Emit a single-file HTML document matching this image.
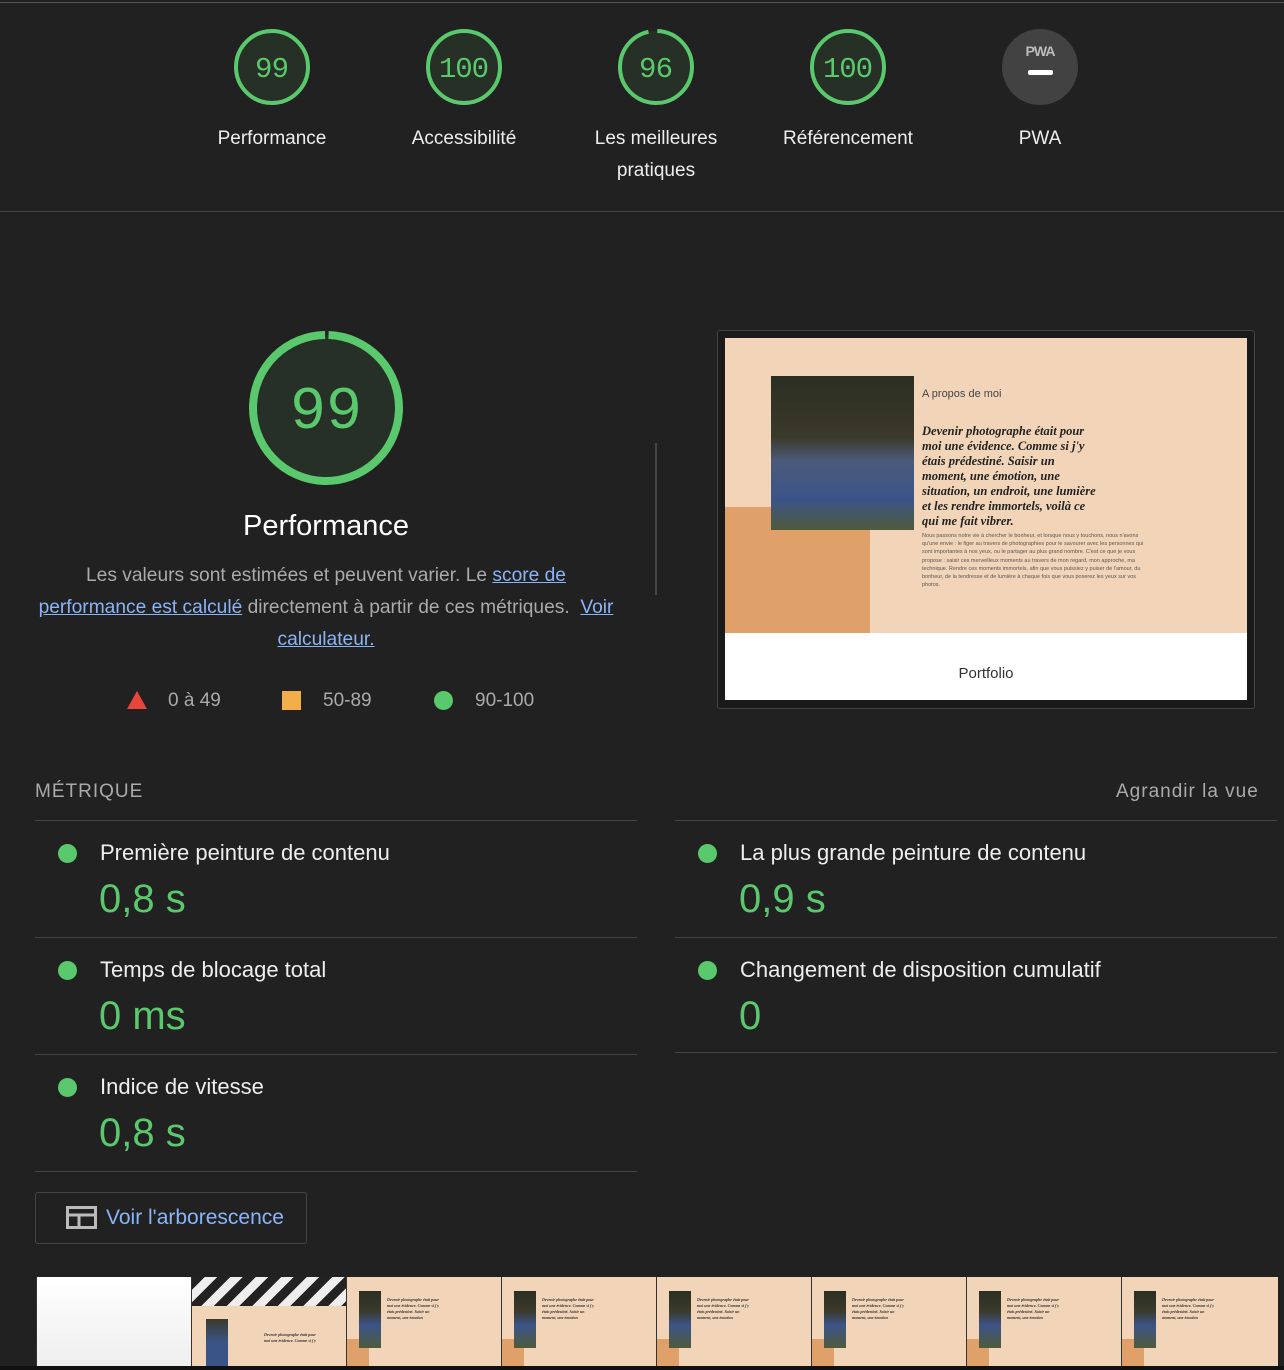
<!DOCTYPE html>
<html><head><meta charset="utf-8"><style>
*{margin:0;padding:0;box-sizing:border-box}
body{width:1284px;height:1370px;background:#212121;font-family:"Liberation Sans",sans-serif;color:#fff;position:relative;overflow:hidden}
.a{position:absolute}
.lbl{position:absolute;width:190px;text-align:center;font-size:19px;line-height:32px;color:#eee}
.hr{position:absolute;height:1px;background:#444}
.dot{position:absolute;width:19px;height:19px;border-radius:50%;background:#5ac86c}
.mt{position:absolute;font-size:22px;color:#eee}
.mv{position:absolute;font-size:40px;color:#5ac86c}
.fr{position:absolute;top:1277px;width:155px;height:89px;background:#f2d5b8;overflow:hidden;border-left:1px solid #333}
.fr .o{position:absolute;left:0;top:62px;width:22px;height:27px;background:#e0a06a}
.fr .p{position:absolute;left:12px;top:14px;width:22px;height:57px;background:linear-gradient(#2a2e22,#3b3a2a 35%,#3b5488 60%,#4f5a3a)}
.fr .t{position:absolute;left:40px;top:20px;width:55px;font-family:"Liberation Serif",serif;font-style:italic;font-weight:bold;font-size:4px;line-height:6px;color:#333}
a{color:#8ab4f8;text-decoration:underline}
</style></head><body>
<div class="hr" style="top:2px;left:0;width:1284px;background:#555"></div>
<svg class="a" style="left:0;top:0" width="1284" height="110">
<g fill="#263026" stroke="#5ac86c" stroke-width="4">
<circle cx="272" cy="67" r="36"/><circle cx="464" cy="67" r="36"/><circle cx="656" cy="67" r="36" stroke-dasharray="217 9" transform="rotate(-88 656 67)"/><circle cx="848" cy="67" r="36"/></g>
<circle cx="1040" cy="67" r="38" fill="#424242"/>
<rect x="1028" y="70" width="25" height="5" rx="2" fill="#fff"/>
<text x="1040" y="56" font-size="14" font-weight="bold" fill="#bbb" text-anchor="middle" font-family="Liberation Sans" letter-spacing="-1">PWA</text>
<g font-family="Liberation Mono" font-size="29" fill="#5ac86c" text-anchor="middle">
<text x="272" y="77" textLength="34">99</text><text x="464" y="77" textLength="50">100</text><text x="656" y="77" textLength="34">96</text><text x="848" y="77" textLength="50">100</text></g>
</svg>
<div class="lbl" style="left:177px;top:123px">Performance</div>
<div class="lbl" style="left:369px;top:123px">Accessibilité</div>
<div class="lbl" style="left:561px;top:123px">Les meilleures<br>pratiques</div>
<div class="lbl" style="left:753px;top:123px">Référencement</div>
<div class="lbl" style="left:945px;top:123px">PWA</div>
<div class="hr" style="top:211px;left:0;width:1284px"></div>

<svg class="a" style="left:246px;top:328px" width="160" height="160">
<circle cx="80" cy="80" r="73" fill="#263026" stroke="#5ac86c" stroke-width="8" stroke-dasharray="455 4" transform="rotate(-88 80 80)"/>
<text x="80" y="100" font-family="Liberation Mono" font-size="60" fill="#5ac86c" text-anchor="middle">99</text>
</svg>
<div class="a" style="left:126px;top:510px;width:400px;text-align:center;font-size:29px">Performance</div>
<div class="a" style="left:0px;top:560px;width:652px;text-align:center;font-size:19.2px;line-height:32px;color:#aaa">Les valeurs sont estimées et peuvent varier. Le <a>score de</a><br><a>performance est calculé</a> directement à partir de ces métriques. &nbsp;<a>Voir</a><br><a>calculateur.</a></div>
<div class="hr" style="left:655px;top:443px;width:2px;height:152px;background:#444"></div>
<svg class="a" style="left:126px;top:690px" width="22" height="20"><polygon points="11,1 21,19 1,19" fill="#e8453c"/></svg>
<div class="a" style="left:168px;top:690px;font-size:19px;color:#aaa">0 à 49</div>
<div class="a" style="left:282px;top:691px;width:19px;height:19px;background:#f2ae4a"></div>
<div class="a" style="left:323px;top:690px;font-size:19px;color:#aaa">50-89</div>
<div class="dot" style="left:434px;top:691px"></div>
<div class="a" style="left:475px;top:690px;font-size:19px;color:#aaa">90-100</div>

<div class="a" style="left:717px;top:330px;width:538px;height:379px;border:1px solid #444;border-radius:3px;background:#1a1a1a"></div>
<div class="a" style="left:725px;top:338px;width:522px;height:295px;background:#f2d5b8;overflow:hidden">
<div class="a" style="left:0;top:169px;width:145px;height:126px;background:#e0a06a"></div>
<div class="a" style="left:46px;top:38px;width:143px;height:154px;background:linear-gradient(#2a2e22,#3b3a2a 40%,#4a5a7a 55%,#3b5488 80%,#4f5a3a)"></div>
<div class="a" style="left:197px;top:50px;font-size:11px;color:#444">A propos de moi</div>
<div class="a" style="left:197px;top:86px;width:175px;font-family:'Liberation Serif',serif;font-style:italic;font-weight:bold;font-size:12.5px;line-height:15px;color:#222">Devenir photographe était pour moi une évidence. Comme si j'y étais prédestiné. Saisir un moment, une émotion, une situation, un endroit, une lumière et les rendre immortels, voilà ce qui me fait vibrer.</div>
<div class="a" style="left:197px;top:194px;width:232px;font-size:5.5px;line-height:8.2px;color:#555">Nous passons notre vie à chercher le bonheur, et lorsque nous y touchons, nous n'avons qu'une envie : le figer au travers de photographies pour le savourer avec les personnes qui sont importantes à nos yeux, ou le partager au plus grand nombre. C'est ce que je vous propose : saisir ces merveilleux moments au travers de mon regard, mon approche, ma technique. Rendre ces moments immortels, afin que vous puissiez y puiser de l'amour, du bonheur, de la tendresse et de lumière à chaque fois que vous poserez les yeux sur vos photos.</div>
</div>
<div class="a" style="left:725px;top:633px;width:522px;height:67px;background:#fff;text-align:center;padding-top:32px;font-size:15px;color:#333">Portfolio</div>

<div class="a" style="left:35px;top:781px;font-size:19px;letter-spacing:1px;color:#aaa">MÉTRIQUE</div>
<div class="a" style="left:1116px;top:781px;font-size:19px;letter-spacing:1px;color:#aaa">Agrandir la vue</div>
<div class="hr" style="left:35px;top:820px;width:602px"></div><div class="hr" style="left:675px;top:820px;width:602px"></div>
<div class="hr" style="left:35px;top:937px;width:602px"></div><div class="hr" style="left:675px;top:937px;width:602px"></div>
<div class="hr" style="left:35px;top:1054px;width:602px"></div><div class="hr" style="left:675px;top:1052px;width:602px"></div>
<div class="hr" style="left:35px;top:1171px;width:602px"></div>
<div class="dot" style="left:58px;top:844px"></div><div class="mt" style="left:100px;top:840px">Première peinture de contenu</div><div class="mv" style="left:99px;top:877px">0,8 s</div>
<div class="dot" style="left:698px;top:844px"></div><div class="mt" style="left:740px;top:840px">La plus grande peinture de contenu</div><div class="mv" style="left:739px;top:877px">0,9 s</div>
<div class="dot" style="left:58px;top:961px"></div><div class="mt" style="left:100px;top:957px">Temps de blocage total</div><div class="mv" style="left:99px;top:994px">0 ms</div>
<div class="dot" style="left:698px;top:961px"></div><div class="mt" style="left:740px;top:957px">Changement de disposition cumulatif</div><div class="mv" style="left:739px;top:994px">0</div>
<div class="dot" style="left:58px;top:1078px"></div><div class="mt" style="left:100px;top:1074px">Indice de vitesse</div><div class="mv" style="left:99px;top:1111px">0,8 s</div>

<div class="a" style="left:35px;top:1192px;width:272px;height:52px;border:1px solid #444;border-radius:3px"></div>
<svg class="a" style="left:66px;top:1206px" width="32" height="24"><rect x="1.5" y="1.5" width="28" height="20" fill="none" stroke="#bbb" stroke-width="3"/><line x1="1" y1="9" x2="30" y2="9" stroke="#bbb" stroke-width="3"/><line x1="13" y1="9" x2="13" y2="22" stroke="#bbb" stroke-width="3"/></svg>
<div class="a" style="left:106px;top:1206px;font-size:21px;color:#8ab4f8">Voir l'arborescence</div>

<div class="fr" style="left:36px;background:linear-gradient(#fff,#eee)"></div>
<div class="fr" style="left:191px"><div class="a" style="left:0;top:0;width:155px;height:29px;background:repeating-linear-gradient(135deg,#222 0 9px,#eee 9px 18px)"></div><div class="a" style="left:14px;top:42px;width:22px;height:47px;background:linear-gradient(#3b3a2a,#3b5488 50%)"></div><div class="t" style="left:72px;top:55px">Devenir photographe était pour moi une évidence. Comme si j'y</div></div>
<div class="fr" style="left:346px"><div class="o"></div><div class="p"></div><div class="t">Devenir photographe était pour moi une évidence. Comme si j'y étais prédestiné. Saisir un moment, une émotion</div></div>
<div class="fr" style="left:501px"><div class="o"></div><div class="p"></div><div class="t">Devenir photographe était pour moi une évidence. Comme si j'y étais prédestiné. Saisir un moment, une émotion</div></div>
<div class="fr" style="left:656px"><div class="o"></div><div class="p"></div><div class="t">Devenir photographe était pour moi une évidence. Comme si j'y étais prédestiné. Saisir un moment, une émotion</div></div>
<div class="fr" style="left:811px"><div class="o"></div><div class="p"></div><div class="t">Devenir photographe était pour moi une évidence. Comme si j'y étais prédestiné. Saisir un moment, une émotion</div></div>
<div class="fr" style="left:966px"><div class="o"></div><div class="p"></div><div class="t">Devenir photographe était pour moi une évidence. Comme si j'y étais prédestiné. Saisir un moment, une émotion</div></div>
<div class="fr" style="left:1121px;width:157px"><div class="o"></div><div class="p"></div><div class="t">Devenir photographe était pour moi une évidence. Comme si j'y étais prédestiné. Saisir un moment, une émotion</div></div>
<div class="a" style="left:0;top:1366px;width:1284px;height:4px;background:#111"></div>
</body></html>
